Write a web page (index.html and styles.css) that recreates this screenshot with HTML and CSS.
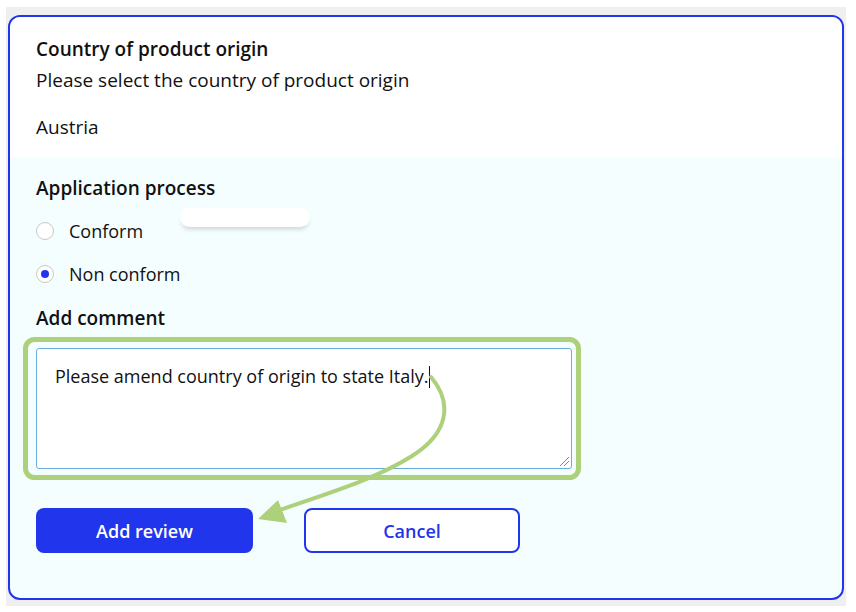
FILE: index.html
```html
<!DOCTYPE html>
<html lang="en">
<head>
<meta charset="utf-8">
<title>Review</title>
<link rel="stylesheet" href="styles.css">
</head>
<body>
<div class="frame">
  <div class="card">
    <section class="origin">
      <h2 class="title">Country of product origin</h2>
      <p class="subtitle">Please select the country of product origin</p>
      <p class="value">Austria</p>
    </section>
    <section class="review">
      <h2 class="title">Application process</h2>
      <label class="radio-row"><span class="radio"></span><span>Conform</span></label>
      <label class="radio-row"><span class="radio checked"></span><span>Non conform</span></label>
      <h2 class="title comment-title">Add comment</h2>
      <div class="textarea">Please amend country of origin to state Italy.<span class="caret"></span><span class="grip"></span></div>
      <div class="actions">
        <button class="btn primary">Add review</button>
        <button class="btn secondary">Cancel</button>
      </div>
    </section>
    <div class="pill"></div>
    <svg class="annotation" width="856" height="612" viewBox="0 0 856 612">
      <rect x="25.5" y="339.5" width="553" height="138" rx="9" fill="none" stroke="#acd17a" stroke-width="5"/>
      <path d="M431 377 C 452 402, 450 432, 412 456 S 325 494, 274 512" fill="none" stroke="#acd17a" stroke-width="4" stroke-linecap="round"/>
      <polygon points="258,519 278,500 287,523" fill="#acd17a"/>
    </svg>
  </div>
</div>
</body>
</html>
```

FILE: styles.css
```css
* { box-sizing: border-box; }
html, body { margin: 0; padding: 0; background: #ffffff; }
body {
  font-family: "Open Sans", "Noto Sans", sans-serif;
  color: #111111;
  width: 856px;
  height: 612px;
  overflow: hidden;
}
.frame {
  margin: 7px 10px 6px 6px;
  width: 840px;
  height: 599px;
  background: #efefef;
  padding: 8px 2px 6px 2px;
}
.card {
  position: relative;
  height: 585px;
  border: 2px solid #2136ec;
  border-radius: 12px;
  overflow: hidden;
  background: #f5feff;
  display: flex;
  flex-direction: column;
}
.annotation {
  position: absolute;
  left: -10px;
  top: -17px;
  pointer-events: none;
}
.origin {
  background: #ffffff;
  padding: 20px 26px 18px 26px;
  display: flex;
  flex-direction: column;
}
.title {
  margin: 0;
  font-size: 19px;
  font-weight: 600;
  line-height: 24px;
}
.subtitle, .value {
  margin: 0;
  font-size: 19px;
  line-height: 24px;
}
.subtitle { margin-top: 7px; }
.value { margin-top: 23px; }
.review {
  flex: 1;
  padding: 19px 26px 0 26px;
  display: flex;
  flex-direction: column;
}
.radio-row {
  display: flex;
  align-items: center;
  gap: 15px;
  font-size: 18px;
  line-height: 24px;
  margin-top: 19px;
}
.radio {
  width: 18px;
  height: 18px;
  border-radius: 50%;
  border: 1px solid #c8c8c8;
  background: #ffffff;
  display: flex;
  align-items: center;
  justify-content: center;
}
.radio.checked::after {
  content: "";
  width: 8px;
  height: 8px;
  border-radius: 50%;
  background: #2136ec;
}
.comment-title { margin-top: 20px; }
.textarea {
  position: relative;
  margin-top: 18px;
  width: 536px;
  height: 121px;
  border: 1px solid #6aaede;
  border-radius: 3px;
  background: #ffffff;
  padding: 15px 18px;
  font-size: 18px;
  line-height: 24px;
}
.caret {
  display: inline-block;
  width: 1px;
  height: 22px;
  background: #111111;
  vertical-align: -5px;
}
.grip {
  position: absolute;
  right: 2px;
  bottom: 2px;
  width: 9px;
  height: 9px;
  background:
    linear-gradient(135deg, transparent 45%, #8a8a8a 45%, #8a8a8a 55%, transparent 55%) no-repeat,
    linear-gradient(135deg, transparent 45%, #8a8a8a 45%, #8a8a8a 55%, transparent 55%) no-repeat;
  background-size: 9px 9px, 5px 5px;
  background-position: 0 0, 4px 4px;
}
.actions {
  display: flex;
  gap: 51px;
  margin-top: 39px;
}
.btn {
  width: 217px;
  height: 45px;
  border-radius: 8px;
  font-family: "Open Sans", "Noto Sans", sans-serif;
  font-size: 18px;
  font-weight: 600;
  cursor: pointer;
}
.btn.primary {
  background: #2136ec;
  color: #ffffff;
  border: none;
}
.btn.secondary {
  width: 216px;
  background: #ffffff;
  color: #2136ec;
  border: 2px solid #2136ec;
}
.pill {
  position: absolute;
  left: 170px;
  top: 191px;
  width: 130px;
  height: 19px;
  border-radius: 10px;
  background: #ffffff;
  box-shadow: 0 4px 5px -2px rgba(0, 0, 0, 0.18);
}
```
